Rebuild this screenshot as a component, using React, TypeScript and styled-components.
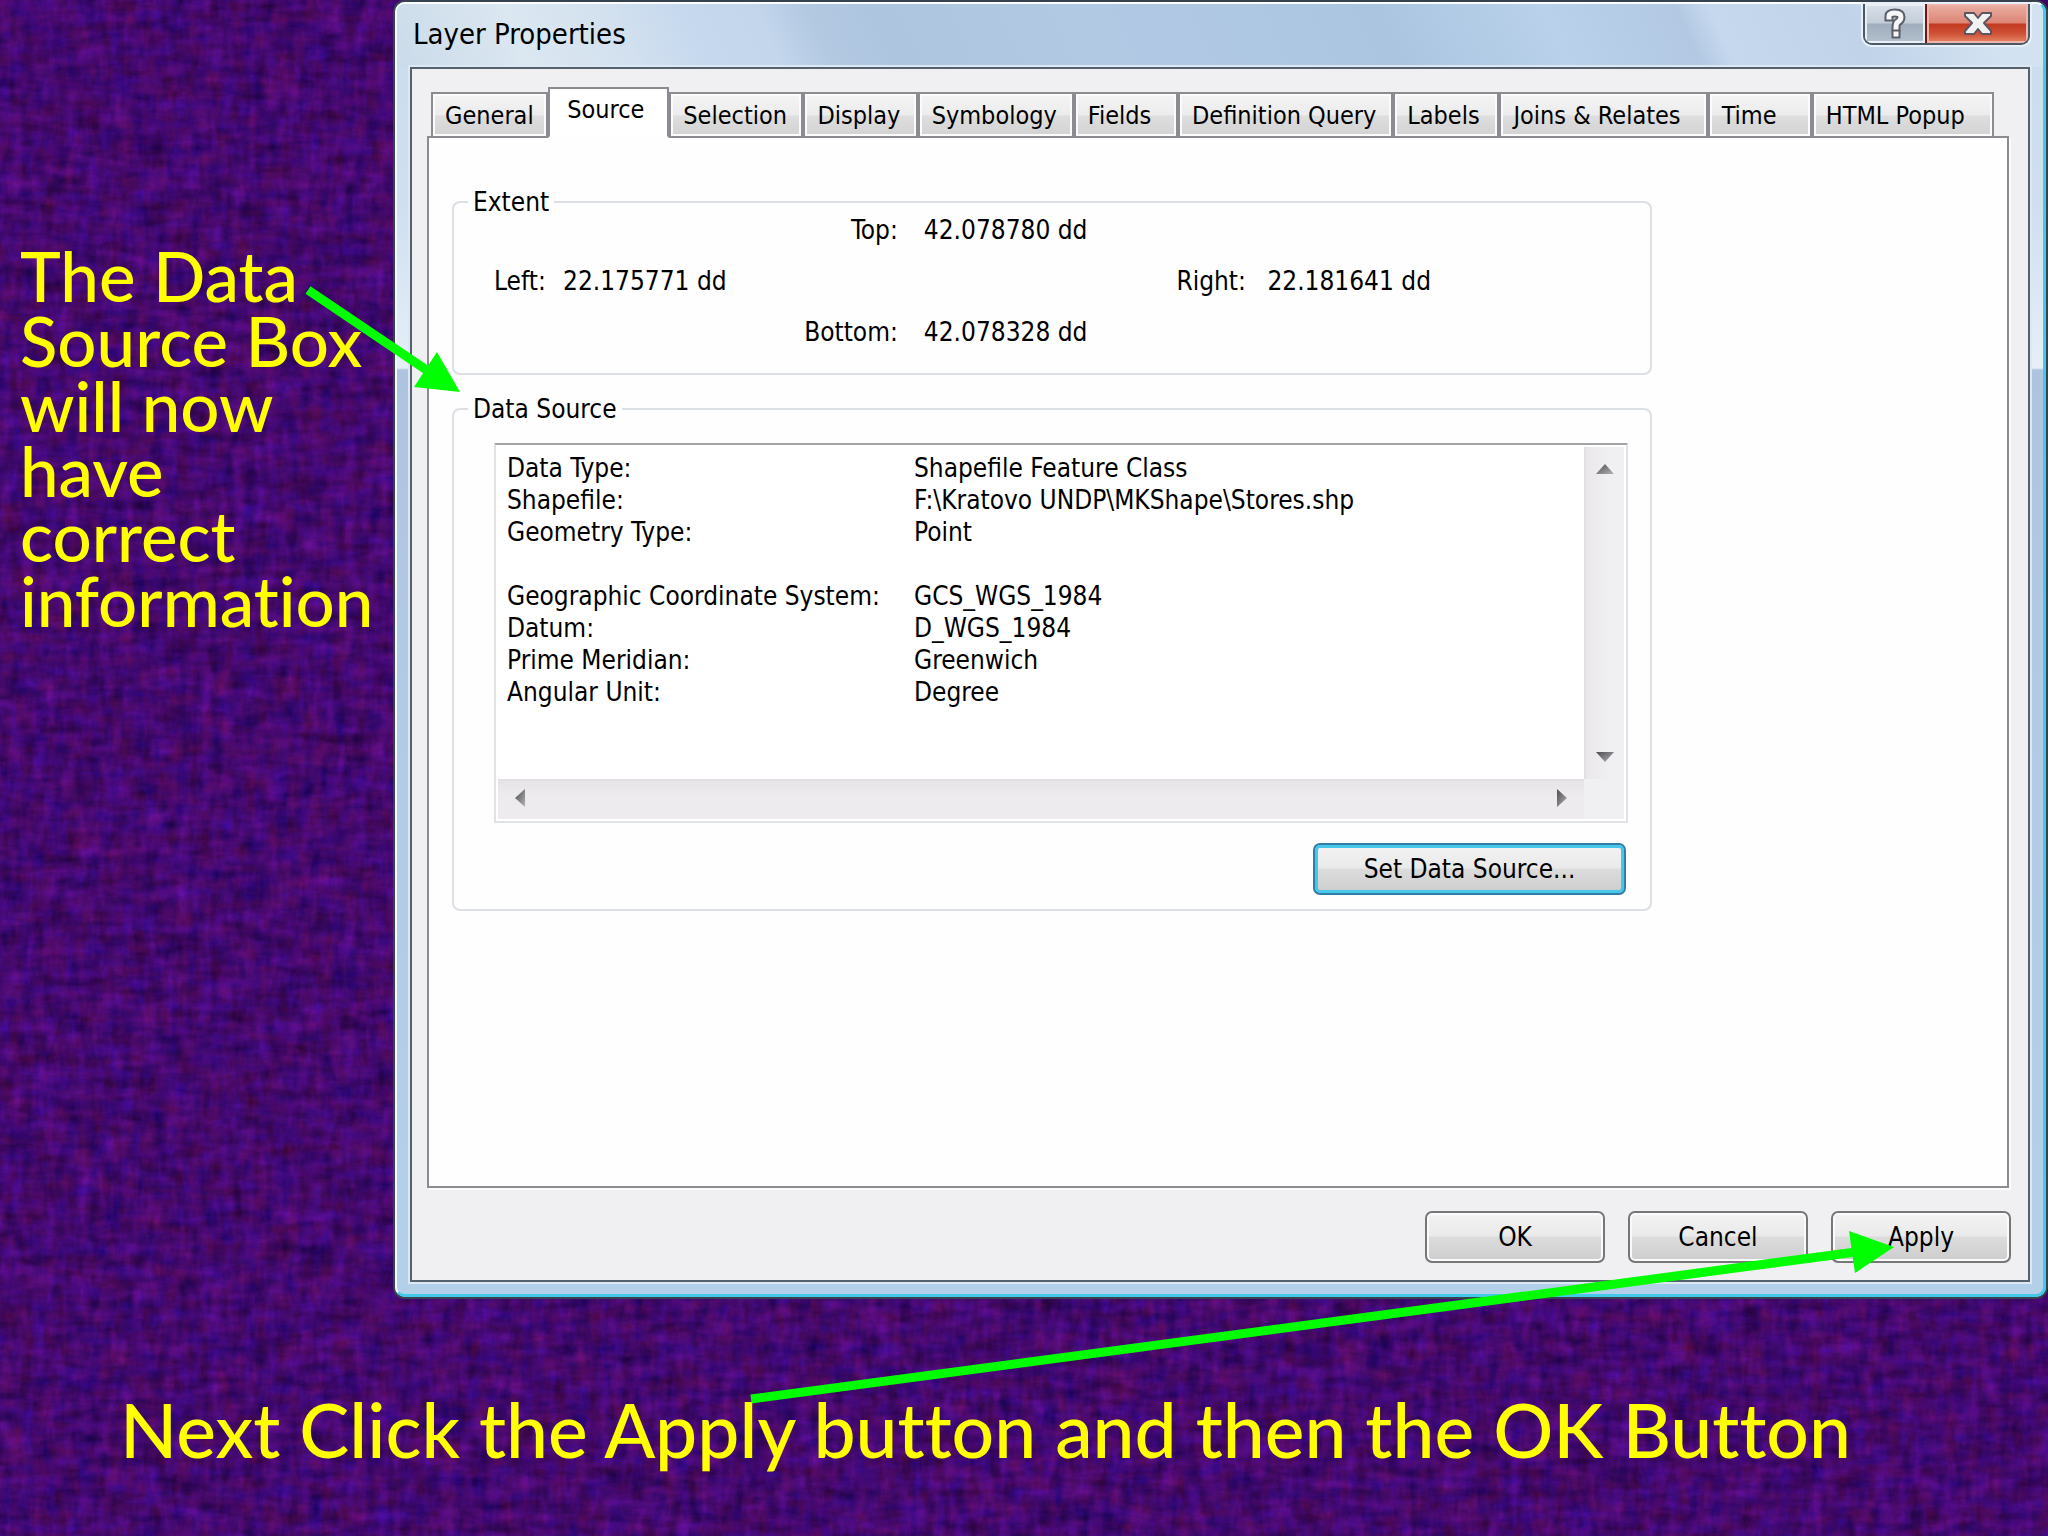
import React from 'react';
import styled, { createGlobalStyle, css } from 'styled-components';

const dialogFont = '"DejaVu Sans Condensed", "DejaVu Sans", sans-serif';

const GlobalStyle = createGlobalStyle`
  *, *::before, *::after { box-sizing: border-box; }
  body { margin: 0; background: #430870; }
`;

/* ---------- slide ---------- */

const Slide = styled.main`
  position: relative;
  min-height: 100vh;
  overflow: hidden;
  display: grid;
  grid-template-columns: 393px 1fr;
  grid-template-rows: auto 1fr;
  row-gap: 85px;
  isolation: isolate;
`;

const Texture = styled.svg`
  position: absolute;
  inset: 0;
  z-index: -1;
  width: 100%;
  height: 100%;
`;

const Arrows = styled.svg`
  position: absolute;
  top: 0;
  left: 0;
  width: 100%;
  pointer-events: none;
`;

const noteText = css`
  margin: 0;
  color: #ffff00;
  font-family: Lato, sans-serif;
  font-weight: 500;
  font-variant-ligatures: none;
`;

const SideNote = styled.p`
  ${noteText}
  padding: 243px 13px 0 20px;
  font-size: 69px;
  line-height: 65px;
`;

const FootNote = styled.p`
  ${noteText}
  grid-column: 1 / -1;
  padding: 0 0 0 120px;
  font-size: 75px;
  line-height: 90px;
`;

/* ---------- dialog frame ---------- */

const Dialog = styled.section`
  border: 2px solid #36424e;
  border-radius: 12px;
  background: #b4cbe4;
  font-family: ${dialogFont};
  font-size: 26px;
  line-height: 32px;
  color: #000;
`;

const Glass = styled.div`
  padding: 0 13px 12px;
  border: solid;
  border-width: 2px 3px 3px 2px;
  border-color: #fbfdff #45c9ea #45c9ea #f4f9fd;
  border-radius: 10px;
  background: linear-gradient(#cbdced 0, #cfdff0 200px, #e6eff7 364px, #aec3de 366px, #b3cae5 700px, #b4d0e8 100%);
`;

const TitleBar = styled.header`
  display: flex;
  justify-content: space-between;
  align-items: center;
  height: 63px;
  margin: 0 -13px;
  padding: 0 13px 0 16px;
  border-radius: 8px 8px 0 0;
  background: linear-gradient(
    65deg,
    #cadbe9 0,
    #dbe7f1 8%,
    #d3e1ef 14%,
    #c5d8ee 19%,
    #c3d6ec 23%,
    #b3c9e2 26%,
    #aec5e0 30%,
    #b2c9e4 42%,
    #abc5e1 60%,
    #b9d1ea 70%,
    #b3c9e3 78%,
    #c6d8ee 80%,
    #c0d3e9 88%,
    #d3e2f1 96%
  );
`;

const Title = styled.h1`
  margin: 0;
  padding-bottom: 4px;
  font-size: 29px;
  font-weight: 400;
  line-height: 36px;
`;

const WindowButtons = styled.div`
  align-self: flex-start;
  display: flex;
  height: 41px;
  border: 2px solid #4b5866;
  border-top: 0;
  border-radius: 0 0 9px 9px;
  box-shadow: 0 0 0 2px #e8f1f9;
  overflow: hidden;
`;

const WindowButton = styled.button<{ $close?: boolean }>`
  display: grid;
  place-items: center;
  width: ${(p) => (p.$close ? 103 : 60)}px;
  padding: 0;
  border: 0;
  border-left: ${(p) => (p.$close ? '2px solid #6b1a12' : '0')};
  box-shadow: inset 0 0 0 2px ${(p) => (p.$close ? '#f0b5aa' : '#e9eff5')};
  background: ${(p) =>
    p.$close
      ? 'linear-gradient(#eab0a4 0, #dd8676 48%, #c23a20 52%, #cf5136 76%, #e58a68 100%)'
      : 'linear-gradient(#d9e1ea 0, #c4ced9 48%, #9fadbc 52%, #b4c1cf 100%)'};
`;

const Client = styled.div`
  padding: 18px 17px 17px 15px;
  border: 2px solid #55616d;
  background: #f0eff1;
  box-shadow: 0 0 0 2px #dce9f5;
`;

/* ---------- tabs ---------- */

const TabStrip = styled.div`
  display: flex;
  align-items: flex-end;
  height: 51px;
  padding: 0 17px 0 4px;
`;

const Tab = styled.button<{ $size: number; $active?: boolean }>`
  flex: ${(p) => p.$size} 1 ${(p) => p.$size}px;
  min-width: 0;
  height: 46px;
  padding: 2px 0 0 12px;
  border: 2px solid #8b8c92;
  box-shadow: inset 0 0 0 2px #fbfbfb;
  background: linear-gradient(#f4f4f5 0, #ececec 50%, #dedede 52%, #d2d2d3 100%);
  font: inherit;
  font-size: 25px;
  line-height: 32px;
  color: inherit;
  text-align: left;
  white-space: nowrap;

  ${(p) =>
    p.$active &&
    css`
      z-index: 1;
      height: 51px;
      padding: 0 0 5px 17px;
      border-bottom-color: #fff;
      box-shadow: none;
      background: #fff;
    `}
`;

const Panel = styled.div`
  margin: -2px 2px 0 0;
  padding: 52px 23px 275px;
  border: 2px solid #8b8c92;
  background: #fefefe;
  box-shadow: 2px 2px 0 #fbfbfb;
`;

/* ---------- groups ---------- */

const Group = styled.fieldset`
  min-width: 0;
  max-width: 1200px;
  margin: 0 0 22px;
  padding: 0 14px 14px;
  border: 2px solid #dcdfe4;
  border-radius: 8px;

  &:last-child { margin-bottom: 0; }
`;

const Legend = styled.legend`
  padding: 0 5px;
  line-height: 24px;
`;

const ExtentGrid = styled.dl`
  display: grid;
  grid-template-columns: 69px 338fr 26px 255fr 91px 364fr;
  row-gap: 19px;
  margin: 0 0 11px;
  padding: 0 8px 0 26px;
`;

const Term = styled.dt<{ $row: number; $col: number; $end?: boolean }>`
  grid-row: ${(p) => p.$row};
  grid-column: ${(p) => p.$col};
  text-align: ${(p) => (p.$end ? 'right' : 'left')};
  white-space: nowrap;
`;

const Value = styled.dd<{ $row: number; $col: number }>`
  grid-row: ${(p) => p.$row};
  grid-column: ${(p) => p.$col};
  margin: 0;
  white-space: nowrap;
`;

const SourceBody = styled.div`
  display: flex;
  flex-direction: column;
  align-items: flex-end;
  gap: 20px;
  padding: 22px 8px 0 26px;
`;

const ScrollBox = styled.div`
  display: grid;
  grid-template-columns: 1fr 40px;
  grid-template-rows: 1fr 40px;
  width: 100%;
  padding: 2px;
  border: 2px solid #e1e2e8;
  border-top-color: #a3a3a8;
  background: #fff;
`;

const SourceTable = styled.table`
  width: 100%;
  margin: 5px 0 71px;
  padding-left: 9px;
  border-spacing: 0;
  table-layout: fixed;
`;

const Row = styled.tr`
  height: 32px;
`;

const Key = styled.th`
  width: 407px;
  padding: 0;
  font-weight: 400;
  text-align: left;
  white-space: nowrap;
`;

const Cell = styled.td`
  padding: 0;
  white-space: nowrap;
`;

const ScrollBar = styled.div<{ $horizontal?: boolean }>`
  display: flex;
  flex-direction: ${(p) => (p.$horizontal ? 'row' : 'column')};
  justify-content: space-between;
  border: 0 solid #e2e0e3;
  border-width: ${(p) => (p.$horizontal ? '2px 0 0' : '0 0 0 2px')};
  background: ${(p) =>
    p.$horizontal
      ? 'linear-gradient(#e6e4e7, #edebee 40%)'
      : 'linear-gradient(90deg, #e9e7ea, #f0eff2 60%)'};
`;

const ScrollButton = styled.button<{ $horizontal: boolean }>`
  display: grid;
  place-items: center;
  width: ${(p) => (p.$horizontal ? 44 : 38)}px;
  height: ${(p) => (p.$horizontal ? 34 : 44)}px;
  padding: 0;
  border: 0;
  background: none;
`;

const ScrollCorner = styled.div`
  background: #f0eff1;
`;

/* ---------- push buttons ---------- */

const PushButton = styled.button<{ $focused?: boolean }>`
  min-width: 180px;
  height: 52px;
  padding: 0 40px;
  border: 2px solid ${(p) => (p.$focused ? '#2f7fa6' : '#77777a')};
  border-radius: 7px;
  box-shadow: inset 0 0 0 ${(p) => (p.$focused ? '3px #48c6ea' : '2px #fafafa')};
  background: linear-gradient(#f4f3f4 0, #eaeaeb 48%, #dcdcdd 50%, #cdcdce 100%);
  font: inherit;
  color: inherit;
  white-space: nowrap;
`;

const SetSource = styled(PushButton)`
  min-width: 313px;
  margin-right: 2px;
`;

const Actions = styled.footer`
  display: flex;
  justify-content: flex-end;
  gap: 23px;
  margin-top: 23px;
`;

/* ---------- data ---------- */

const tabs = [
  { label: 'General', size: 117 },
  { label: 'Source', size: 121, active: true },
  { label: 'Selection', size: 134 },
  { label: 'Display', size: 114 },
  { label: 'Symbology', size: 156 },
  { label: 'Fields', size: 104 },
  { label: 'Definition Query', size: 215 },
  { label: 'Labels', size: 106 },
  { label: 'Joins & Relates', size: 208 },
  { label: 'Time', size: 104 },
  { label: 'HTML Popup', size: 182 },
];

const extent = [
  { label: 'Top:', value: '42.078780 dd', row: 1, col: 2, valueCol: 4, end: true },
  { label: 'Left:', value: '22.175771 dd', row: 2, col: 1, valueCol: 2 },
  { label: 'Right:', value: '22.181641 dd', row: 2, col: 5, valueCol: 6 },
  { label: 'Bottom:', value: '42.078328 dd', row: 3, col: 2, valueCol: 4, end: true },
];

const sourceRows: [string, string][] = [
  ['Data Type:', 'Shapefile Feature Class'],
  ['Shapefile:', 'F:\\Kratovo UNDP\\MKShape\\Stores.shp'],
  ['Geometry Type:', 'Point'],
  ['', ''],
  ['Geographic Coordinate System:', 'GCS_WGS_1984'],
  ['Datum:', 'D_WGS_1984'],
  ['Prime Meridian:', 'Greenwich'],
  ['Angular Unit:', 'Degree'],
];

/* ---------- drawings ---------- */

const trianglePaths = {
  up: 'M9 4 18 14H0Z',
  down: 'M0 4H18L9 14Z',
  left: 'M4 9 14 0V18Z',
  right: 'M4 0 14 9 4 18Z',
};

function ScrollArrow({ to }: { to: keyof typeof trianglePaths }) {
  return (
    <ScrollButton
      type="button"
      aria-label={`Scroll ${to}`}
      $horizontal={to === 'left' || to === 'right'}
    >
      <svg width="18" height="18" viewBox="0 0 18 18" aria-hidden="true">
        <defs>
          <linearGradient id={`tri-${to}`} x1="0" y1="0" x2="1" y2="1">
            <stop offset="0" stopColor="#4c4c50" />
            <stop offset="1" stopColor="#b4b4b8" />
          </linearGradient>
        </defs>
        <path d={trianglePaths[to]} fill={`url(#tri-${to})`} />
      </svg>
    </ScrollButton>
  );
}

function HelpGlyph() {
  const d = 'M5 9V8Q5 5 11 5Q17 5 17 9Q17 12 14 14Q12 15 12 19';
  return (
    <svg width="22" height="32" viewBox="0 0 22 32" fill="none" aria-hidden="true">
      <g stroke="#5a5f69" strokeWidth="9" strokeLinecap="square">
        <path d={d} />
        <path d="M12 26V26.1" />
      </g>
      <g stroke="#f7f7f8" strokeWidth="5" strokeLinecap="square">
        <path d={d} />
        <path d="M12 26V26.1" />
      </g>
    </svg>
  );
}

function CloseGlyph() {
  const d = 'M1 2H10L14 7L18 2H27V5L20 12L27 20V23H18L14 18L10 23H1V20L8 12L1 5Z';
  return (
    <svg width="28" height="25" viewBox="0 0 28 25" aria-hidden="true">
      <path d={d} fill="#f1f1f2" stroke="#5f5560" strokeWidth="2" strokeLinejoin="round" />
    </svg>
  );
}

function Backdrop() {
  return (
    <Texture aria-hidden="true">
      <filter id="fabric" x="0" y="0" width="100%" height="100%" colorInterpolationFilters="sRGB">
        <feTurbulence type="fractalNoise" baseFrequency="0.03 0.09" numOctaves="4" seed="4" />
        <feColorMatrix
          values="0.35 0.3 0 0 -0.06  0.03 0.08 0 0 -0.02  0 0.4 0.4 0 0.03  0 0 0 0 1"
          result="weft"
        />
        <feTurbulence type="fractalNoise" baseFrequency="0.09 0.03" numOctaves="4" seed="11" />
        <feColorMatrix
          values="0.35 0.3 0 0 -0.06  0.03 0.08 0 0 -0.02  0 0.4 0.4 0 0.03  0 0 0 0 1"
          result="warp"
        />
        <feComposite in="weft" in2="warp" operator="arithmetic" k2="0.5" k3="0.5" />
      </filter>
      <rect width="100%" height="100%" filter="url(#fabric)" />
    </Texture>
  );
}

function Pointers() {
  return (
    <Arrows viewBox="0 0 2048 1536" aria-hidden="true">
      <g stroke="#00ff00" strokeWidth="9">
        <path d="M308 290 428 371" />
        <path d="M751 1399 1856 1252" />
      </g>
      <g fill="#00ff00">
        <path d="M460 392 437 352 414 387Z" />
        <path d="M1894 1247 1849 1231 1855 1273Z" />
      </g>
    </Arrows>
  );
}

export default function App() {
  return (
    <>
      <GlobalStyle />
      <Slide>
        <Backdrop />
        <SideNote>The Data Source Box will now have correct information</SideNote>

        <Dialog role="dialog" aria-labelledby="dialog-title">
          <Glass>
            <TitleBar>
              <Title id="dialog-title">Layer Properties</Title>
              <WindowButtons>
                <WindowButton type="button" aria-label="Help">
                  <HelpGlyph />
                </WindowButton>
                <WindowButton type="button" aria-label="Close" $close>
                  <CloseGlyph />
                </WindowButton>
              </WindowButtons>
            </TitleBar>

            <Client>
              <TabStrip role="tablist">
                {tabs.map((t) => (
                  <Tab
                    key={t.label}
                    type="button"
                    role="tab"
                    aria-selected={!!t.active}
                    $size={t.size}
                    $active={t.active}
                  >
                    {t.label}
                  </Tab>
                ))}
              </TabStrip>

              <Panel role="tabpanel">
                <Group>
                  <Legend>Extent</Legend>
                  <ExtentGrid>
                    {extent.map((e) => (
                      <React.Fragment key={e.label}>
                        <Term $row={e.row} $col={e.col} $end={e.end}>
                          {e.label}
                        </Term>
                        <Value $row={e.row} $col={e.valueCol}>
                          {e.value}
                        </Value>
                      </React.Fragment>
                    ))}
                  </ExtentGrid>
                </Group>

                <Group>
                  <Legend>Data Source</Legend>
                  <SourceBody>
                    <ScrollBox>
                      <SourceTable>
                        <tbody>
                          {sourceRows.map(([key, value], i) => (
                            <Row key={i}>
                              <Key scope="row">{key}</Key>
                              <Cell>{value}</Cell>
                            </Row>
                          ))}
                        </tbody>
                      </SourceTable>
                      <ScrollBar>
                        <ScrollArrow to="up" />
                        <ScrollArrow to="down" />
                      </ScrollBar>
                      <ScrollBar $horizontal>
                        <ScrollArrow to="left" />
                        <ScrollArrow to="right" />
                      </ScrollBar>
                      <ScrollCorner />
                    </ScrollBox>
                    <SetSource type="button" $focused>
                      Set Data Source...
                    </SetSource>
                  </SourceBody>
                </Group>
              </Panel>

              <Actions>
                <PushButton type="button">OK</PushButton>
                <PushButton type="button">Cancel</PushButton>
                <PushButton type="button">Apply</PushButton>
              </Actions>
            </Client>
          </Glass>
        </Dialog>

        <FootNote>Next Click the Apply button and then the OK Button</FootNote>
        <Pointers />
      </Slide>
    </>
  );
}
